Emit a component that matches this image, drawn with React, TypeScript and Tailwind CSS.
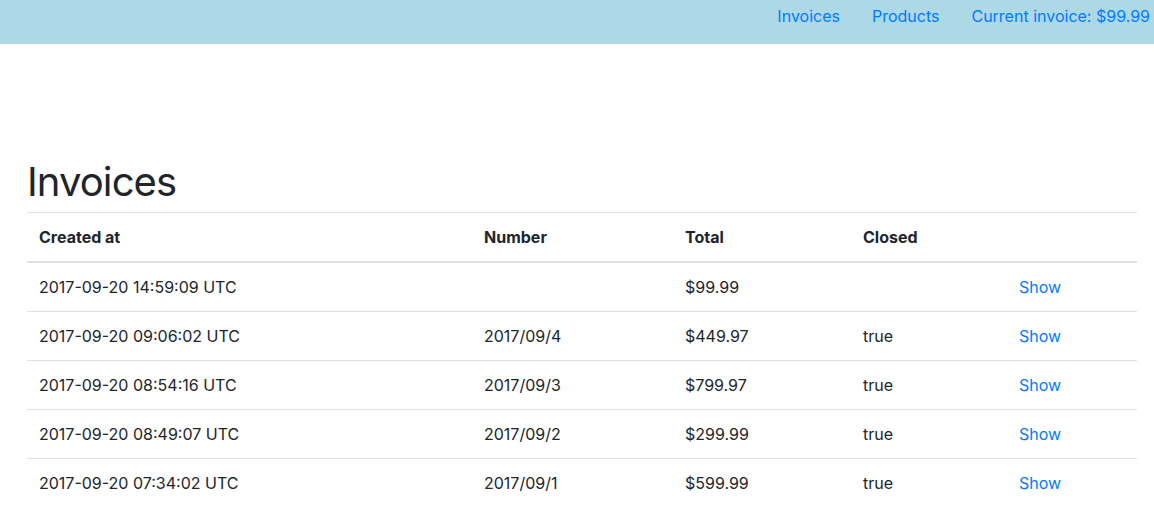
import React from 'react';

interface Invoice {
  createdAt: string;
  number: string;
  total: string;
  closed: string;
}

const invoices: Invoice[] = [
  { createdAt: '2017-09-20 14:59:09 UTC', number: '', total: '$99.99', closed: '' },
  { createdAt: '2017-09-20 09:06:02 UTC', number: '2017/09/4', total: '$449.97', closed: 'true' },
  { createdAt: '2017-09-20 08:54:16 UTC', number: '2017/09/3', total: '$799.97', closed: 'true' },
  { createdAt: '2017-09-20 08:49:07 UTC', number: '2017/09/2', total: '$299.99', closed: 'true' },
  { createdAt: '2017-09-20 07:34:02 UTC', number: '2017/09/1', total: '$599.99', closed: 'true' },
];

export default function App() {
  return (
    <div className="min-h-screen bg-white text-[#212529] font-['Inter','Liberation_Sans',sans-serif] text-base">
      {/* Top nav */}
      <nav className="h-[44px] bg-[#add8e6] flex justify-end items-start pt-[4px] pr-[4px]">
        <ul className="flex gap-8 leading-6">
          <li><a href="#" className="text-[#007bff]">Invoices</a></li>
          <li><a href="#" className="text-[#007bff]">Products</a></li>
          <li><a href="#" className="text-[#007bff]">Current invoice: $99.99</a></li>
        </ul>
      </nav>

      <main className="px-[27px] pt-[112px]">
        <h1 className="text-[40px] leading-[48px] font-normal tracking-[-0.9px] pt-[2px] mb-[6px]">Invoices</h1>

        <table className="w-[1110px] table-fixed border-collapse leading-6">
          <colgroup>
            <col className="w-[445px]" />
            <col className="w-[201px]" />
            <col className="w-[178px]" />
            <col className="w-[156px]" />
            <col className="w-[130px]" />
          </colgroup>
          <thead>
            <tr>
              <th className="text-left font-bold px-3 py-3 border-t border-b-2 border-[#dee2e6]">Created at</th>
              <th className="text-left font-bold px-3 py-3 border-t border-b-2 border-[#dee2e6]">Number</th>
              <th className="text-left font-bold px-3 py-3 border-t border-b-2 border-[#dee2e6]">Total</th>
              <th className="text-left font-bold px-3 py-3 border-t border-b-2 border-[#dee2e6]">Closed</th>
              <th className="text-left font-bold px-3 py-3 border-t border-b-2 border-[#dee2e6]"></th>
            </tr>
          </thead>
          <tbody>
            {invoices.map((inv) => (
              <tr key={inv.createdAt}>
                <td className="px-3 py-3 border-t border-[#dee2e6]">{inv.createdAt}</td>
                <td className="px-3 py-3 border-t border-[#dee2e6]">{inv.number}</td>
                <td className="px-3 py-3 border-t border-[#dee2e6]">{inv.total}</td>
                <td className="px-3 py-3 border-t border-[#dee2e6]">{inv.closed}</td>
                <td className="px-3 py-3 border-t border-[#dee2e6]">
                  <a href="#" className="text-[#007bff]">Show</a>
                </td>
              </tr>
            ))}
          </tbody>
        </table>
      </main>
    </div>
  );
}
